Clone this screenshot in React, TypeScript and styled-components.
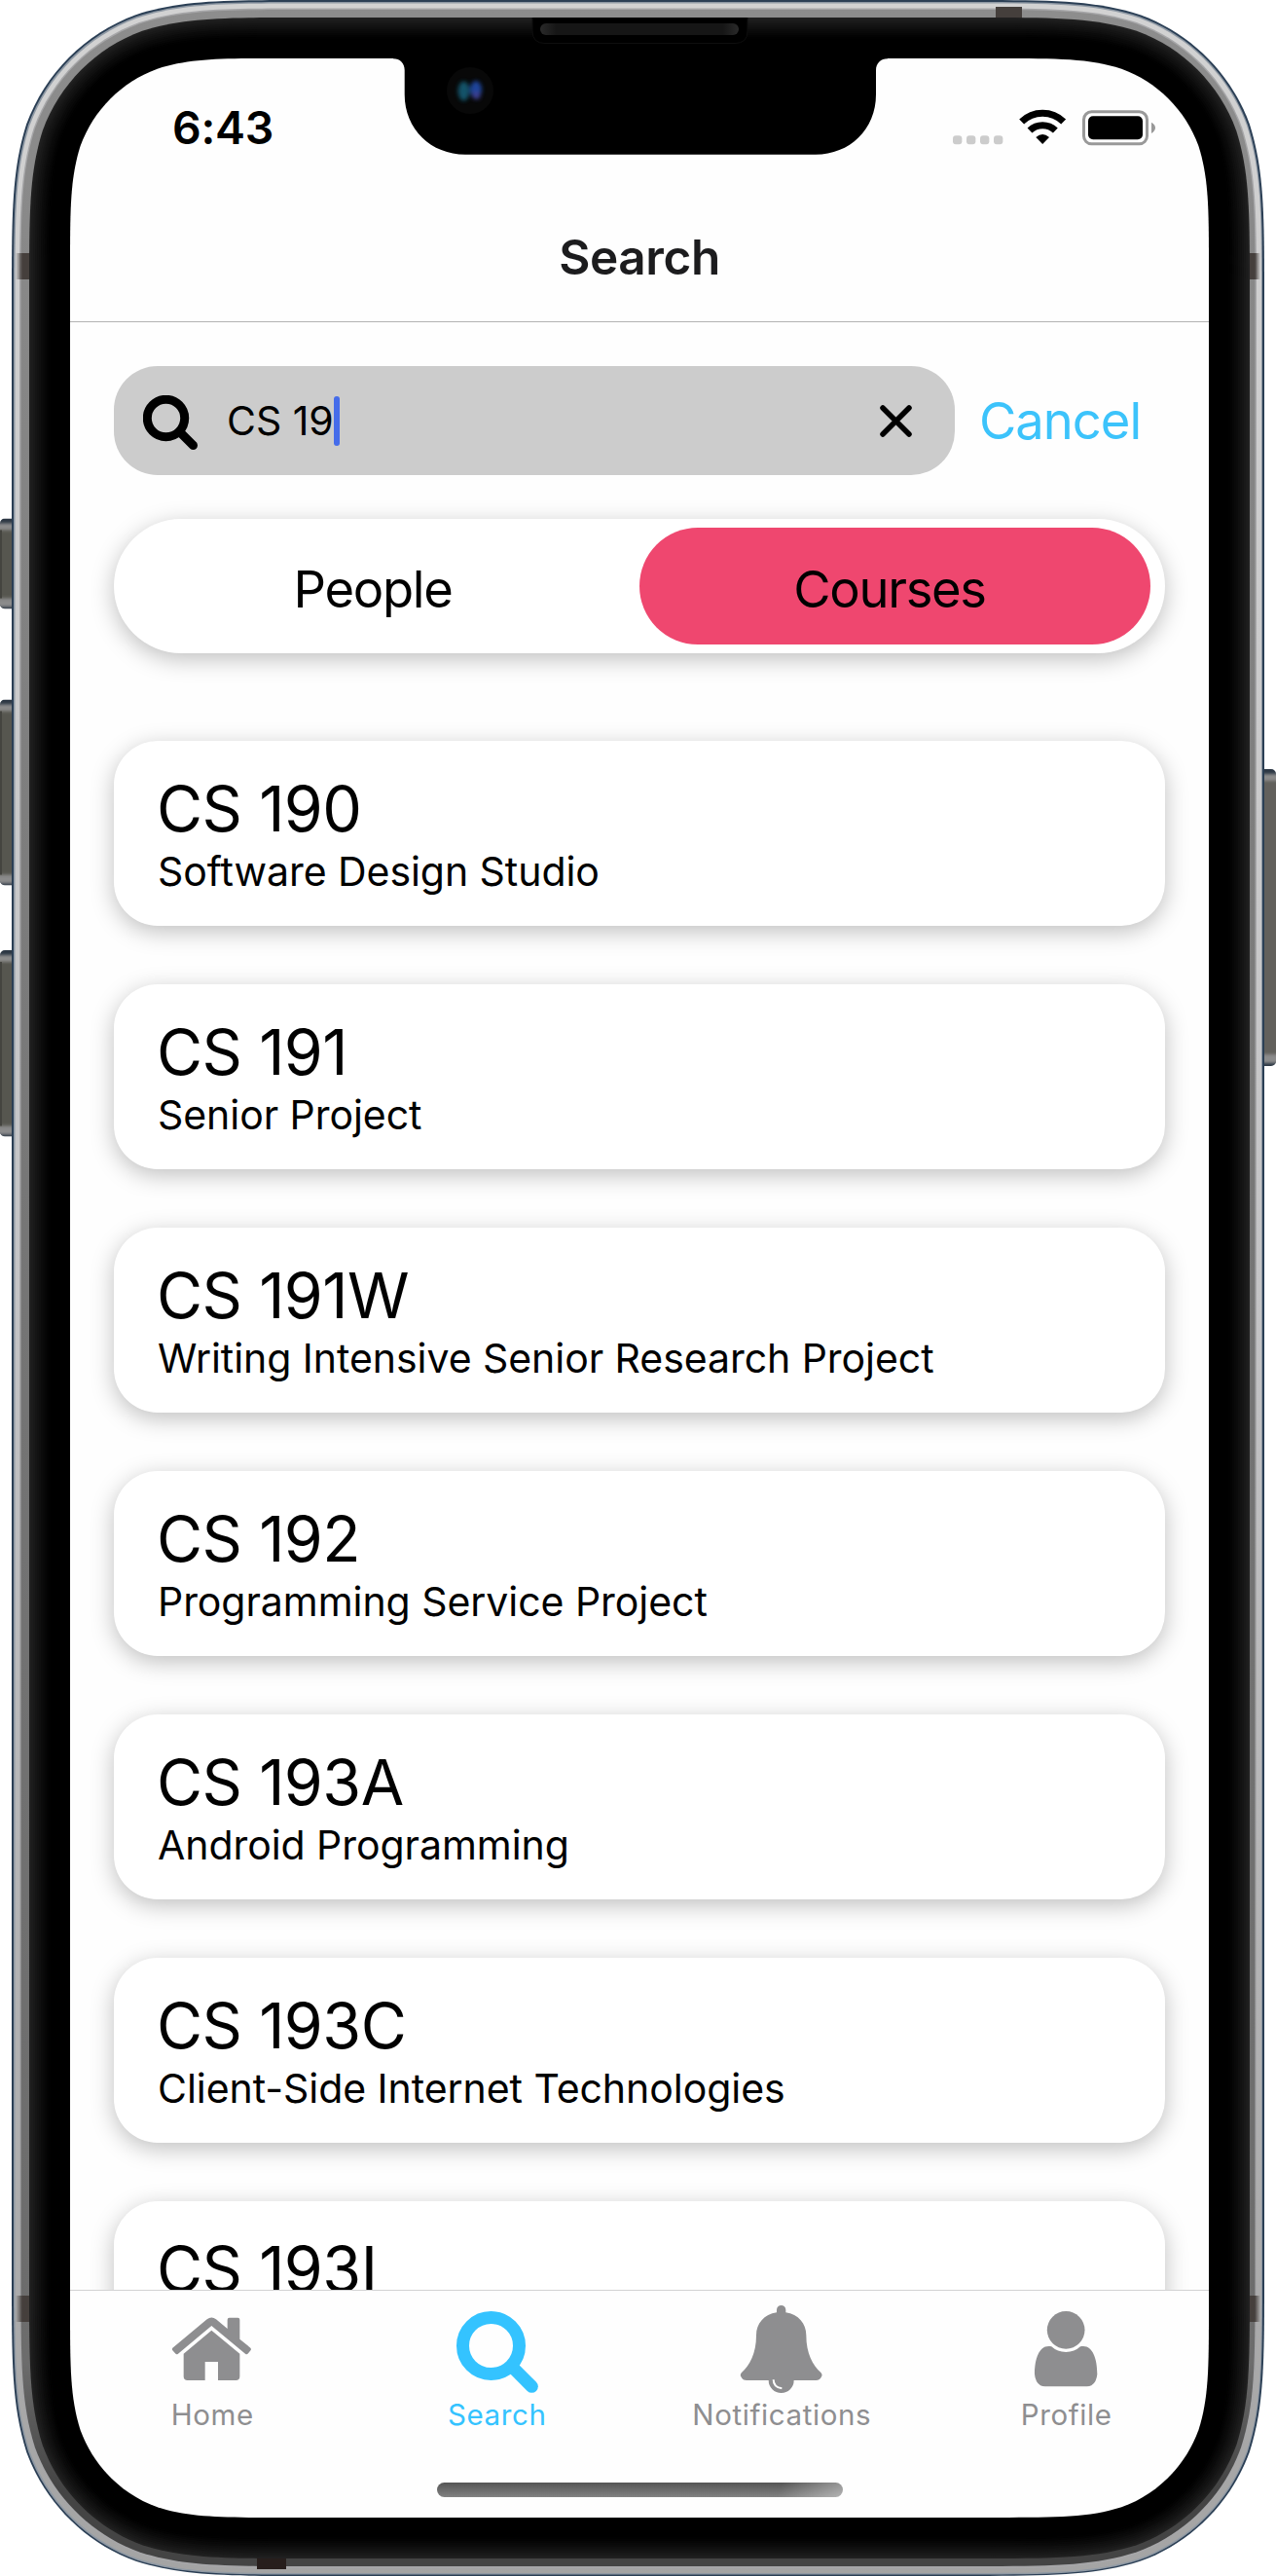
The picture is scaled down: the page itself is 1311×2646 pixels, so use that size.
import React from 'react';
import styled, { createGlobalStyle } from 'styled-components';

const GlobalStyle = createGlobalStyle`
  *, *::before, *::after { box-sizing: border-box; }
  body { margin: 0; background: #fff; }
`;

const Device = styled.div`
  position: relative;
  width: 1311px;
  height: 2646px;
  padding: 60px 69px 60px 72px;
  overflow: hidden;
  font-family: Inter, 'Liberation Sans', sans-serif;
  color: #000;
`;

const FrameArt = styled.svg`
  position: absolute;
  inset: 0;
  pointer-events: none;
`;

const Screen = styled.div`
  display: flex;
  flex-direction: column;
  width: 1170px;
  height: 2526px;
  background: #fefefe;
`;

const StatusBar = styled.div`
  display: flex;
  flex: none;
  align-items: center;
  justify-content: space-between;
  height: 142px;
  padding: 0 54px 0 105px;
`;

const Clock = styled.span`
  font-size: 46.5px;
  font-weight: 600;
  letter-spacing: -0.3px;
`;

const StatusIcons = styled.div`
  display: flex;
  align-items: center;
`;

const Header = styled.header`
  display: flex;
  flex: none;
  align-items: center;
  justify-content: center;
  height: 129px;
  padding-bottom: 4px;
  border-bottom: 1px solid #b3b3b3;
`;

const Title = styled.h1`
  margin: 0;
  font-size: 49.5px;
  font-weight: 600;
  letter-spacing: -0.4px;
  color: #1c1c1e;
`;

const Content = styled.main`
  display: flex;
  flex: 1;
  flex-direction: column;
  min-height: 0;
  padding: 45px 45px 0;
  overflow: hidden;
`;

const SearchRow = styled.div`
  display: flex;
  flex: none;
  align-items: center;
  height: 112px;
`;

const SearchField = styled.div`
  display: flex;
  align-items: center;
  width: 864px;
  height: 112px;
  padding: 0 44px 0 30px;
  border-radius: 45px;
  background: #ccc;
`;

const FieldIcon = styled.svg`
  flex: none;
  margin-top: 5px;
`;

const Query = styled.span`
  margin-left: 29px;
  font-size: 41px;
  line-height: 50px;
  white-space: pre;
  letter-spacing: -0.05px;
`;

const Caret = styled.span`
  width: 6px;
  height: 51px;
  border-radius: 3px;
  background: #456cea;
`;

const Clear = styled.button`
  display: flex;
  margin: 0 0 0 auto;
  padding: 0;
  border: 0;
  background: none;
`;

const Cancel = styled.button`
  margin: 0 0 0 25px;
  padding: 0;
  border: 0;
  background: none;
  font: 400 52.5px/64px Inter, 'Liberation Sans', sans-serif;
  letter-spacing: -1px;
  color: #3cc3fb;
`;

const Segments = styled.div`
  display: flex;
  flex: none;
  align-items: center;
  justify-content: space-between;
  height: 138px;
  margin-top: 45px;
  padding: 0 15px 0 9px;
  border-radius: 69px;
  background: #fff;
  box-shadow: 0 6px 23px rgba(0, 0, 0, 0.25);
`;

const Segment = styled.div<{ $active?: boolean }>`
  display: flex;
  align-items: center;
  justify-content: center;
  width: 525px;
  height: 120px;
  padding: 5px 11px 0 0;
  border-radius: 60px;
  background: ${(p) => (p.$active ? '#ef476f' : 'transparent')};
  font-size: 52.5px;
  letter-spacing: -1.3px;
`;

const CourseList = styled.div`
  display: flex;
  flex: none;
  flex-direction: column;
  gap: 60px;
  margin-top: 90px;
`;

const Card = styled.article`
  height: 190px;
  padding: 31px 45px 0;
  border-radius: 45px;
  background: #fff;
  box-shadow: 0 6px 23px rgba(0, 0, 0, 0.25);
`;

const Code = styled.div`
  margin-left: -1px;
  font-size: 64.5px;
  line-height: 78px;
  letter-spacing: -0.5px;
`;

const Name = styled.div`
  font-size: 41px;
  line-height: 50px;
  letter-spacing: -0.05px;
`;

const TabBar = styled.nav`
  display: flex;
  flex: none;
  flex-direction: column;
  align-items: center;
  justify-content: space-between;
  height: 234px;
  padding: 15px 0 21px;
  border-top: 1px solid #d2d2d3;
`;

const Tabs = styled.div`
  display: flex;
  align-self: stretch;
`;

const Tab = styled.div<{ $active?: boolean }>`
  display: flex;
  flex: 1;
  flex-direction: column;
  align-items: center;
  gap: 4px;
  color: ${(p) => (p.$active ? '#34c3ff' : '#8e8e90')};
  font-size: 29.5px;
  line-height: 36px;
  letter-spacing: 0.6px;
`;

const HomeIndicator = styled.div`
  width: 417px;
  height: 15px;
  border-radius: 8px;
  background:
    linear-gradient(105deg, transparent 84%, rgba(255, 255, 255, 0.4) 100%),
    linear-gradient(#545454, #828282);
`;

/* Rounded rectangle with continuous-curvature corners. */
function squircle(x0: number, y0: number, x1: number, y1: number, r: number) {
  const a = 1.52866 * r, b = 1.08849 * r, c = 0.86841 * r, d = 0.63149 * r;
  const e = 0.07491 * r, f = 0.37282 * r, g = 0.16906 * r;
  return [
    `M${x0 + a} ${y0}H${x1 - a}`,
    `C${x1 - b} ${y0} ${x1 - c} ${y0} ${x1 - d} ${y0 + e}`,
    `C${x1 - f} ${y0 + g} ${x1 - g} ${y0 + f} ${x1 - e} ${y0 + d}`,
    `C${x1} ${y0 + c} ${x1} ${y0 + b} ${x1} ${y0 + a}V${y1 - a}`,
    `C${x1} ${y1 - b} ${x1} ${y1 - c} ${x1 - e} ${y1 - d}`,
    `C${x1 - g} ${y1 - f} ${x1 - f} ${y1 - g} ${x1 - d} ${y1 - e}`,
    `C${x1 - c} ${y1} ${x1 - b} ${y1} ${x1 - a} ${y1}H${x0 + a}`,
    `C${x0 + b} ${y1} ${x0 + c} ${y1} ${x0 + d} ${y1 - e}`,
    `C${x0 + f} ${y1 - g} ${x0 + g} ${y1 - f} ${x0 + e} ${y1 - d}`,
    `C${x0} ${y1 - c} ${x0} ${y1 - b} ${x0} ${y1 - a}V${y0 + a}`,
    `C${x0} ${y0 + b} ${x0} ${y0 + c} ${x0 + e} ${y0 + d}`,
    `C${x0 + g} ${y0 + f} ${x0 + f} ${y0 + g} ${x0 + d} ${y0 + e}`,
    `C${x0 + c} ${y0} ${x0 + b} ${y0} ${x0 + a} ${y0}Z`,
  ].join('');
}

const SCREEN = squircle(72, 60, 1242, 2586, 142);

const BEZEL_SHADES = Array.from({ length: 12 }, (_, i) => {
  const v = Math.round(32 * Math.pow(1 - i / 11, 1.3));
  return { inset: i * 2, fill: `rgb(${v},${v},${v})` };
});

const LEFT_KEYS = [[532.5, 93], [718.5, 191], [976, 191.5]];

function Frame() {
  return (
    <FrameArt width="1311" height="2646" viewBox="0 0 1311 2646">
      <defs>
        <linearGradient id="bandLeft">
          <stop offset="0" stopColor="#453f3c" stopOpacity="0" />
          <stop offset="0.5" stopColor="#453f3c" />
          <stop offset="1" stopColor="#453f3c" />
        </linearGradient>
        <linearGradient id="bandRight">
          <stop offset="0" stopColor="#453f3c" />
          <stop offset="0.5" stopColor="#453f3c" />
          <stop offset="1" stopColor="#453f3c" stopOpacity="0" />
        </linearGradient>
        <linearGradient id="light" x1="0" y1="0" x2="0" y2="1">
          <stop offset="0" stopColor="#d2d2d2" />
          <stop offset="0.5" stopColor="#c4c4c6" />
          <stop offset="1" stopColor="#a4a4a4" />
        </linearGradient>
        <linearGradient id="steel" x1="0" y1="0" x2="0" y2="1">
          <stop offset="0" stopColor="#8d8d8d" />
          <stop offset="0.5" stopColor="#757575" />
          <stop offset="0.92" stopColor="#6c6c6c" />
          <stop offset="0.97" stopColor="#444" />
          <stop offset="1" stopColor="#444" />
        </linearGradient>
        <linearGradient id="speaker">
          <stop offset="0" stopColor="#2a2a2a" />
          <stop offset="0.08" stopColor="#161616" />
          <stop offset="0.92" stopColor="#161616" />
          <stop offset="1" stopColor="#2a2a2a" />
        </linearGradient>
        <filter id="soft" x="-50%" y="-50%" width="200%" height="200%">
          <feGaussianBlur stdDeviation="2.2" />
        </filter>
        <filter id="edge" x="-50%" y="-5%" width="200%" height="110%">
          <feGaussianBlur stdDeviation="1.6" />
        </filter>
        <clipPath id="keys">
          {LEFT_KEYS.map(([y, h]) => (
            <rect key={y} x="0" y={y} width="30" height={h} rx="5" />
          ))}
          <rect x="1280" y="790" width="31" height="305" rx="5" />
        </clipPath>
        <mask id="hole">
          <rect width="1311" height="2646" fill="#fff" />
          <path d={SCREEN} fill="#000" />
        </mask>
      </defs>

      <g clipPath="url(#keys)">
        {LEFT_KEYS.map(([y, h]) => (
          <g key={y}>
            <rect x="-10" y={y} width="40" height={h} fill="#2c3744" />
            <rect x="-10" y={y + 5} width="40" height={h - 7} fill="#8b8b8b" filter="url(#edge)" />
            <rect x="-10" y={y + 12} width="40" height={h - 23} fill="#57564f" filter="url(#edge)" />
            <rect x="0" y={y + 12} width="2" height={h - 23} fill="#44443f" />
          </g>
        ))}
        <rect x="1280" y="790" width="41" height="305" fill="#2c3744" />
        <rect x="1280" y="795" width="41" height="297" fill="#8b8b8b" filter="url(#edge)" />
        <rect x="1280" y="802" width="41" height="281" fill="#62615b" filter="url(#edge)" />
      </g>

      <g mask="url(#hole)">
        <path d={squircle(12, 0, 1299, 2646, 202)} fill="#2b3f55" />
        <path d={squircle(14, 2, 1297, 2644.5, 200)} fill="#8f99a4" />
        <path d={squircle(15.5, 3.5, 1296, 2643, 199)} fill="url(#light)" />
        <path d={squircle(20, 8.5, 1291, 2638, 195)} fill="#a6a6a8" />
        <path d={squircle(21.5, 10, 1289.5, 2636, 193)} fill="url(#steel)" />
        <g fill="#453f3c">
          <rect x="16" y="260" width="15" height="27" fill="url(#bandLeft)" />
          <rect x="1283" y="260" width="12" height="27" fill="url(#bandRight)" />
          <rect x="16" y="2358" width="15" height="27" fill="url(#bandLeft)" />
          <rect x="1283" y="2358" width="12" height="27" fill="url(#bandRight)" />
          <rect x="1023" y="7" width="27" height="12" />
          <rect x="264" y="2627" width="30" height="12" fill="#271e1c" />
        </g>
        {BEZEL_SHADES.map(({ inset, fill }) => (
          <path
            key={inset}
            d={squircle(30 + inset, 18 + inset, 1284 - inset, 2628 - inset, 184 - inset)}
            fill={fill}
          />
        ))}
      </g>

      <path
        d="M404 59H912V60.300C905 60.300 900 65 900 72V97C900 133 873 158.700 838 158.700H478C443 158.700 415.700 133 415.700 97V72C415.700 65 411 60.300 404 60.300Z"
        fill="#000"
      />
      <path d="M547 18V32Q547 44.500 560 44.500H755Q768 44.500 768 32V18" fill="#000" stroke="#0e0e0e" />
      <rect x="555" y="24" width="204" height="12" rx="6" fill="url(#speaker)" />
      <circle cx="483" cy="93" r="24" fill="#080808" />
      <g filter="url(#soft)" opacity="0.85">
        <ellipse cx="476.500" cy="93.500" rx="6" ry="10" fill="#17607a" />
        <ellipse cx="489" cy="92" rx="6" ry="9" fill="#2350b4" />
        <ellipse cx="489.500" cy="98" rx="4" ry="4" fill="#4548a8" />
      </g>
    </FrameArt>
  );
}

/* Signal placeholder, wifi and battery. */
function StatusGlyphs() {
  return (
    <svg width="209" height="38" viewBox="0 0 627 114">
      <g fill="#ccc">
        {[0, 42, 84, 126].map((x) => (
          <rect key={x} x={x} y="82" width="28" height="27" rx="9" />
        ))}
      </g>
      <g fill="none" stroke="#000" strokeWidth="21">
        <path d="M212 39 A92 92 0 0 1 341 39" />
        <path d="M237 66 A57 57 0 0 1 316 66" />
      </g>
      <path d="M276.500 108L256 87Q276.500 69 297 87Z" />
      <rect x="403.500" y="8.500" width="195" height="99" rx="24" fill="none" stroke="#999" strokeWidth="9" />
      <rect x="417" y="22" width="168" height="72" rx="15" />
      <path d="M612 41Q624 48 624 58T612 75Z" fill="#999" />
    </svg>
  );
}

const TabSvg = ({ x, children }: { x: number; children: React.ReactNode }) => (
  <svg width="90" height="90" viewBox={`${x} 24 270 270`} fill="currentColor">
    {children}
  </svg>
);

const HomeIcon = () => (
  <TabSvg x={25}>
    <path d="M38 155L144 67Q158 56 172 67L207 96V68Q207 62 213 62H239Q245 62 245 68V128L278 155Q281 158 279 162L271 172Q267 177 262 173L158 87L55 173Q50 177 46 172L38 163Q35 159 38 155Z" />
    <path d="M158 101L245 173V243Q245 255 233 255H178V198H138V255H84Q72 255 72 243V173Z" />
  </TabSvg>
);

const SearchTabIcon = () => (
  <TabSvg x={903}>
    <circle cx="1018.500" cy="148.500" r="87" fill="none" stroke="currentColor" strokeWidth="39" />
    <path d="M1086 216L1144 274" stroke="currentColor" strokeWidth="39" strokeLinecap="round" />
  </TabSvg>
);

const BellIcon = () => (
  <TabSvg x={25}>
    <path d="M145 46V38A14 14 0 0 1 173 38V46C212 52 236 80 236 116C236 172 256 208 281 231Q287 237 283 244Q279 255 266 255H198A39 39 0 0 1 120 255H52Q39 255 35 244Q31 237 37 231C62 208 82 172 82 116C82 80 106 52 145 46Z" />
    <path d="M135 253Q135 277 161 280" fill="none" stroke="#fefefe" strokeWidth="6" />
  </TabSvg>
);

const PersonIcon = () => (
  <TabSvg x={903}>
    <circle cx="1035.500" cy="100" r="58" />
    <path d="M991 151Q1009 168 1035.500 168T1080 151C1115 142 1132 184 1132 236Q1130 260 1114 271Q1108 274 1100 274H971Q963 274 957 271Q941 260 939 236C939 184 956 142 991 151Z" />
  </TabSvg>
);

const courses = [
  ['CS 190', 'Software Design Studio'],
  ['CS 191', 'Senior Project'],
  ['CS 191W', 'Writing Intensive Senior Research Project'],
  ['CS 192', 'Programming Service Project'],
  ['CS 193A', 'Android Programming'],
  ['CS 193C', 'Client-Side Internet Technologies'],
  ['CS 193I', ''],
];

const tabs = [
  { label: 'Home', Icon: HomeIcon },
  { label: 'Search', Icon: SearchTabIcon, active: true },
  { label: 'Notifications', Icon: BellIcon },
  { label: 'Profile', Icon: PersonIcon },
];

export default function App() {
  return (
    <>
      <GlobalStyle />
      <Device>
        <Screen>
          <StatusBar>
            <Clock>6:43</Clock>
            <StatusIcons>
              <StatusGlyphs />
            </StatusIcons>
          </StatusBar>
          <Header>
            <Title>Search</Title>
          </Header>
          <Content>
            <SearchRow>
              <SearchField>
                <FieldIcon width="57" height="57" viewBox="0 0 57 57" fill="none" stroke="#000" strokeWidth="9">
                  <circle cx="23.500" cy="23.500" r="19.200" />
                  <path d="M38.500 38.500L51.500 51.500" strokeLinecap="round" />
                </FieldIcon>
                <Query>CS 19</Query>
                <Caret />
                <Clear>
                  <svg width="33" height="33" viewBox="0 0 33 33" stroke="#000" strokeWidth="5.500" strokeLinecap="round">
                    <path d="M3 3L30 30M30 3L3 30" />
                  </svg>
                </Clear>
              </SearchField>
              <Cancel>Cancel</Cancel>
            </SearchRow>
            <Segments>
              <Segment>People</Segment>
              <Segment $active>Courses</Segment>
            </Segments>
            <CourseList>
              {courses.map(([code, name]) => (
                <Card key={code}>
                  <Code>{code}</Code>
                  <Name>{name}</Name>
                </Card>
              ))}
            </CourseList>
          </Content>
          <TabBar>
            <Tabs>
              {tabs.map(({ label, Icon, active }) => (
                <Tab key={label} $active={active}>
                  <Icon />
                  {label}
                </Tab>
              ))}
            </Tabs>
            <HomeIndicator />
          </TabBar>
        </Screen>
        <Frame />
      </Device>
    </>
  );
}
